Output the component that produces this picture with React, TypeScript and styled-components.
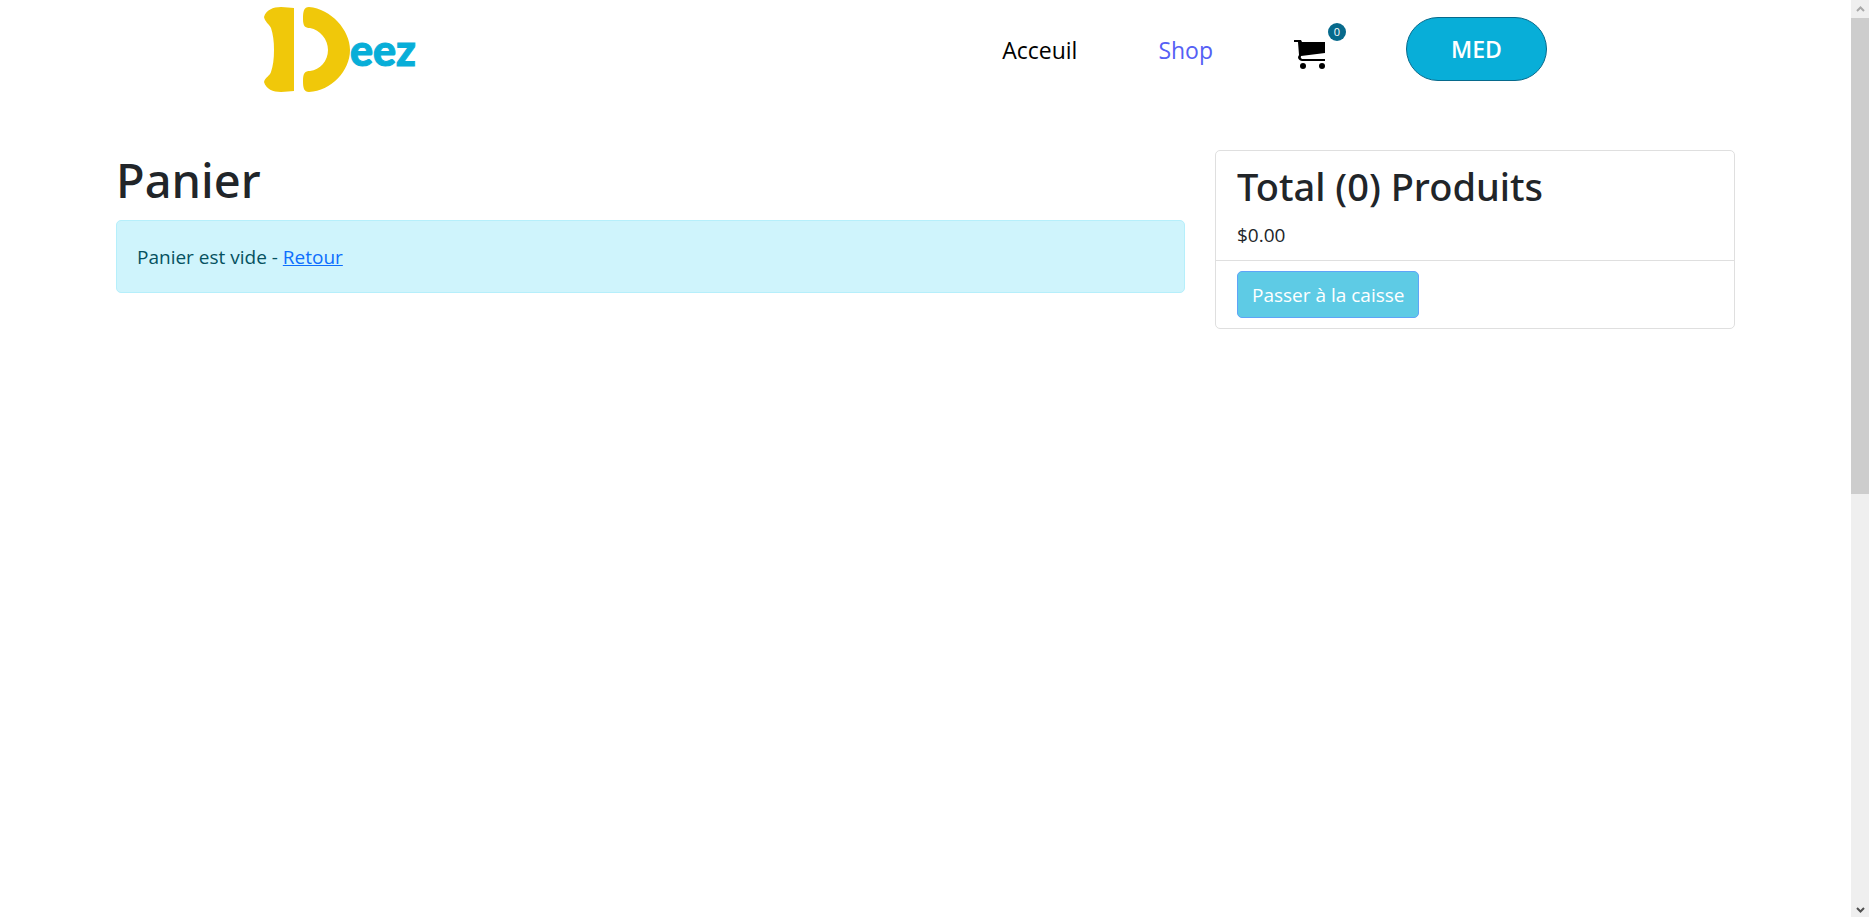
import React from "react";
import styled, { createGlobalStyle } from "styled-components";

const GlobalStyle = createGlobalStyle`
  *, *::before, *::after { box-sizing: border-box; }
  body {
    margin: 0;
    background: #fff;
    color: #212529;
    font-family: "Open Sans", "Noto Sans", sans-serif;
    font-size: 19px;
    line-height: 30px;
  }
`;

const Screen = styled.div`
  display: grid;
  grid-template-columns: minmax(0, 1fr) 18px;
  min-height: 100vh;
`;

const Page = styled.div`
  min-width: 0;
`;

const Header = styled.header`
  display: flex;
  align-items: center;
  justify-content: space-between;
  height: 100px;
  padding: 0 304px 0 264px;
`;

const Logo = styled.a`
  display: flex;
  align-items: center;
  color: #08aed8;
  font-family: Lato, sans-serif;
  font-size: 43px;
  font-weight: 900;
  line-height: 88px;
  text-decoration: none;
  -webkit-text-stroke: 1px #08aed8;
`;

const LogoMark = styled.svg`
  display: block;
  width: 86px;
  height: 86px;
`;

const Nav = styled.nav`
  display: flex;
  align-items: center;
  gap: 81px;
`;

const NavLink = styled.a<{ $active?: boolean }>`
  color: ${(p) => (p.$active ? "#5560f5" : "#000")};
  font-size: 23px;
  text-decoration: none;
`;

const CartLink = styled.a`
  position: relative;
  display: block;
  width: 31px;
  height: 30px;
  margin-top: 10px;
  color: #000;
`;

const Badge = styled.span`
  position: absolute;
  top: -17px;
  right: -21px;
  width: 18px;
  height: 18px;
  border-radius: 50%;
  background: #076a8c;
  color: #fff;
  font-size: 11px;
  line-height: 17px;
  text-align: center;
`;

const UserButton = styled.button`
  width: 141px;
  height: 64px;
  border: 1px solid #076a8c;
  border-radius: 32px;
  background: #08aed8;
  color: #fff;
  font: inherit;
  font-size: 23px;
  font-weight: 600;
  margin-bottom: 2px;
`;

const Main = styled.main`
  display: grid;
  grid-template-columns: minmax(0, 1069fr) minmax(0, 520fr);
  gap: 30px;
  align-items: start;
  width: 100%;
  max-width: 1649px;
  margin: 50px auto 0;
  padding: 0 15px;
`;

const Title = styled.h1`
  margin: 0 0 10px;
  font-family: "Noto Sans", "Open Sans", sans-serif;
  font-size: 47px;
  font-weight: 500;
  line-height: 60px;
`;

const Alert = styled.div`
  padding: 21px 20px 20px;
  border: 1px solid #b6effb;
  border-radius: 5px;
  background: #cff4fc;
  color: #055160;
`;

const TextLink = styled.a`
  color: #0d6efd;
`;

const Card = styled.section`
  border: 1px solid #dfdfdf;
  border-radius: 5px;
`;

const CardRow = styled.div`
  padding: 10px 21px;

  &:first-child {
    padding-top: 11px;
  }

  & + & {
    border-top: 1px solid #dfdfdf;
  }
`;

const Total = styled.h2`
  margin: 0 0 10px;
  font-family: "Noto Sans", "Open Sans", sans-serif;
  font-size: 38px;
  font-weight: 500;
  line-height: 48px;
`;

const Price = styled.p`
  margin: 0;
`;

const Checkout = styled.button`
  display: block;
  height: 47px;
  padding: 0 14px;
  border: 1px solid #5fa4f8;
  border-radius: 5px;
  background: #5ecbe5;
  color: #fff;
  font: inherit;
`;

const Scrollbar = styled.div`
  position: sticky;
  top: 0;
  display: flex;
  flex-direction: column;
  height: 100vh;
  background: #efefef;
`;

const Arrow = styled.svg`
  display: block;
  width: 18px;
  height: 18px;
  flex: none;
`;

const Track = styled.div`
  flex: 1;
`;

const Thumb = styled.div`
  height: 54%;
  background: #cdcdcd;
`;

export default function App() {
  return (
    <>
      <GlobalStyle />
      <Screen>
        <Page>
          <Header>
            <Logo href="#" aria-label="Deez">
              <LogoMark viewBox="0 0 86 86" fill="#f0c80a" aria-hidden="true">
                <path d="M30 1V84C26 84 22 85 17 85C9 85 2 82 0 75C1 70 6 69 7 65C9 59 10 52 10 43C10 34 9 27 7 21C5 17 1 15 0 10C2 3 9 0 17 0C22 0 26 1 30 1Z" />
                <path d="M39 12C39 4 40 0 45 0C67 2 86 23 86 43C86 64 67 84 45 85C40 85 39 81 39 74C39 66 41 64 46 64C56 63 64 54 64 43C64 32 56 23 46 21C41 21 39 19 39 12Z" />
              </LogoMark>
              <span>eez</span>
            </Logo>
            <Nav>
              <NavLink href="#">Acceuil</NavLink>
              <NavLink href="#" $active>
                Shop
              </NavLink>
              <CartLink href="#" aria-label="Panier">
                <svg width="31" height="30" viewBox="0 0 31 30" aria-hidden="true">
                  <path d="M0 0H7L8 2H31V13L7 16Q6 18 8 19H31V21H8Q4 20 4 17L5 15L4 2H0Z" fill="currentColor" />
                  <circle cx="9" cy="26" r="3" fill="currentColor" />
                  <circle cx="28" cy="26" r="3" fill="currentColor" />
                </svg>
                <Badge>0</Badge>
              </CartLink>
              <UserButton type="button">MED</UserButton>
            </Nav>
          </Header>
          <Main>
            <section>
              <Title>Panier</Title>
              <Alert role="alert">
                Panier est vide - <TextLink href="#">Retour</TextLink>
              </Alert>
            </section>
            <Card>
              <CardRow>
                <Total>Total (0) Produits</Total>
                <Price>$0.00</Price>
              </CardRow>
              <CardRow>
                <Checkout type="button">Passer à la caisse</Checkout>
              </CardRow>
            </Card>
          </Main>
        </Page>
        <Scrollbar aria-hidden="true">
          <Arrow viewBox="0 0 18 18" fill="none" stroke="#a9a9a9" strokeWidth="2">
            <path d="M6 11L9.500 7.500L13 11" />
          </Arrow>
          <Track>
            <Thumb />
          </Track>
          <Arrow viewBox="0 0 18 18" fill="none" stroke="#505050" strokeWidth="2">
            <path d="M6 9L9.500 12.500L13 9" />
          </Arrow>
        </Scrollbar>
      </Screen>
    </>
  );
}
